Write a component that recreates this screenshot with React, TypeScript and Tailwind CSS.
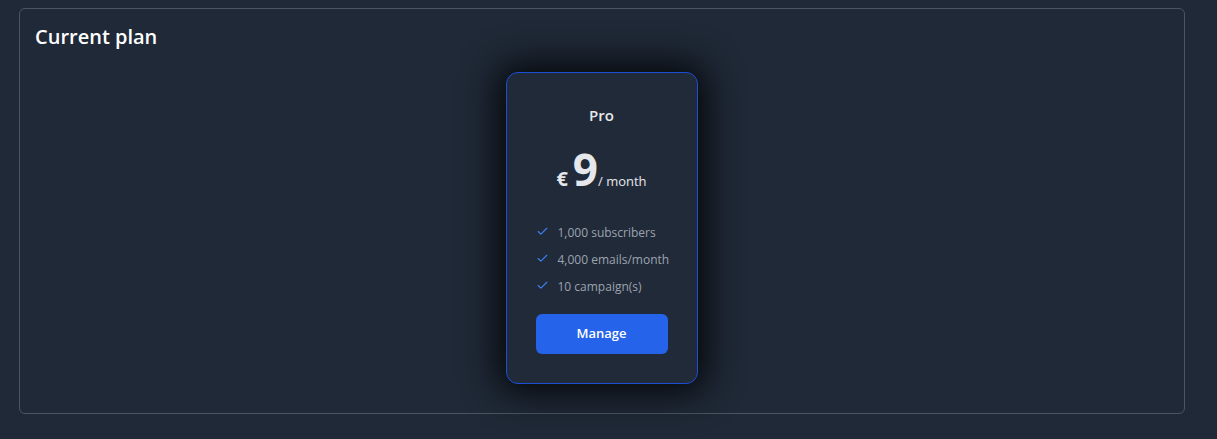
import { Check } from "lucide-react";

const features = ["1,000 subscribers", "4,000 emails/month", "10 campaign(s)"];

export default function App() {
  return (
    <div
      className="min-h-[439px] bg-[#1f2937] pt-2 pl-[19px] pr-8"
      style={{ fontFamily: '"Open Sans", "Noto Sans", sans-serif' }}
    >
      <div className="h-[406px] rounded-md border border-[#4b5563] pl-[15px] pr-4 pt-[12px]">
        <h2 className="text-[20px] font-semibold leading-[32px] text-white">Current plan</h2>
        <div className="mt-[19px] flex justify-center">
          <div className="flex h-[312px] w-[192px] flex-col rounded-xl border border-[#1d4ed8] bg-[#212a39] px-[29px] pt-[31px] shadow-[0_0_36px_8px_rgba(0,0,0,0.85)]">
            <div className="text-center text-[15px] font-semibold leading-[22px] text-[#e5e7eb]">Pro</div>
            <div className="mt-[18px] flex items-baseline justify-center text-[#e5e7eb]">
              <span className="mr-[5px] text-[20px] font-bold">€</span>
              <span className="text-[44px] font-bold leading-[50px]">9</span>
              <span className="text-[13px]">/ month</span>
            </div>
            <ul className="mt-[30px] space-y-[9px]">
              {features.map((f) => (
                <li
                  key={f}
                  className="flex items-center gap-[9px] whitespace-nowrap text-[12px] leading-[18px] text-[#9ca3af]"
                >
                  <Check className="h-[13px] w-[13px] shrink-0 -translate-y-[2px] text-[#3b82f6]" strokeWidth={2} />
                  {f}
                </li>
              ))}
            </ul>
            <button
              type="button"
              className="mt-[18px] h-[40px] w-full rounded-md bg-[#2563eb] text-[13px] font-semibold text-white"
            >
              Manage
            </button>
          </div>
        </div>
      </div>
    </div>
  );
}
